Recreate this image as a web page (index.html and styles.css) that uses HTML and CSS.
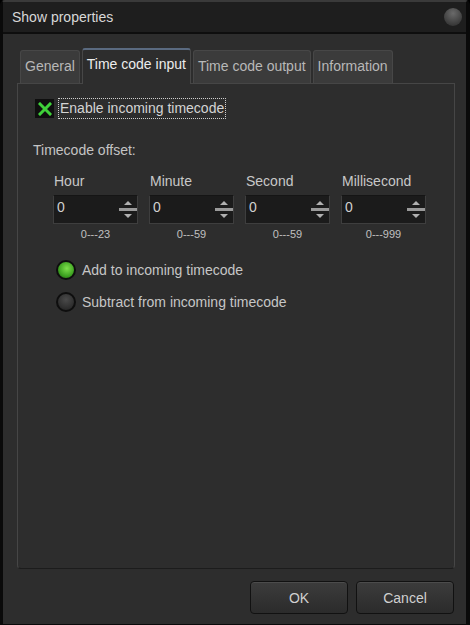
FILE: index.html
```html
<!DOCTYPE html>
<html lang="en">
<head>
<meta charset="UTF-8" />
<meta name="viewport" content="width=device-width, initial-scale=1" />
<title>Show properties</title>
<link rel="stylesheet" href="styles.css">
</head>
<body>

<div class="window">
  <div class="titlebar">
    <span class="title">Show properties</span>
    <span class="close-btn"></span>
  </div>

  <div class="tabs">
    <div class="tab">General</div>
    <div class="tab active">Time code input</div>
    <div class="tab">Time code output</div>
    <div class="tab">Information</div>
  </div>

  <div class="panel">
    <div class="check-row">
      <span class="checkbox">
        <svg width="14" height="14" viewBox="0 0 14 14">
          <path d="M2 2 L12 12 M12 2 L2 12" stroke="#3fd03a" stroke-width="3" stroke-linecap="square"/>
        </svg>
      </span>
      <span class="check-label">Enable incoming timecode</span>
    </div>

    <div class="section-label">Timecode offset:</div>

    <div class="spin-grid">
      <div class="spin">
        <div class="spin-label">Hour</div>
        <div class="spin-box"><span>0</span><span class="arrows"><i class="up"></i><b></b><i class="down"></i></span></div>
        <div class="spin-range">0---23</div>
      </div>
      <div class="spin">
        <div class="spin-label">Minute</div>
        <div class="spin-box"><span>0</span><span class="arrows"><i class="up"></i><b></b><i class="down"></i></span></div>
        <div class="spin-range">0---59</div>
      </div>
      <div class="spin">
        <div class="spin-label">Second</div>
        <div class="spin-box"><span>0</span><span class="arrows"><i class="up"></i><b></b><i class="down"></i></span></div>
        <div class="spin-range">0---59</div>
      </div>
      <div class="spin">
        <div class="spin-label">Millisecond</div>
        <div class="spin-box"><span>0</span><span class="arrows"><i class="up"></i><b></b><i class="down"></i></span></div>
        <div class="spin-range">0---999</div>
      </div>
    </div>

    <div class="radios">
      <div class="radio-row"><span class="radio on"></span>Add to incoming timecode</div>
      <div class="radio-row"><span class="radio"></span>Subtract from incoming timecode</div>
    </div>
  </div>

  <div class="buttons">
    <button class="btn">OK</button>
    <button class="btn">Cancel</button>
  </div>
</div>

</body>
</html>
```

FILE: styles.css
```css
body {
  margin: 0;
  background: #000;
  font-family: "Liberation Sans", Arial, sans-serif;
  color: #c9c9c9;
}
.window {
  width: 470px;
  height: 625px;
  box-sizing: border-box;
  background: #2d2d2d;
  border: 1px solid #0a0a0a;
  border-left-width: 3px;
  border-right-width: 4px;
  border-top: 2px solid #3a3a3a;
  border-radius: 5px 5px 0 0;
  display: flex;
  flex-direction: column;
}
.titlebar {
  height: 30px;
  background: #1e1e1e;
  border-bottom: 2px solid #0e0e0e;
  display: flex;
  align-items: center;
  justify-content: space-between;
  padding: 0 4px 0 9px;
}
.title {
  font-size: 14px;
  color: #d8d8d8;
}
.close-btn {
  width: 18px;
  height: 18px;
  border-radius: 50%;
  background: radial-gradient(circle at 50% 30%, #6a6a6a, #3c3c3c 70%, #2a2a2a);
}
.tabs {
  display: flex;
  align-items: flex-end;
  gap: 2px;
  padding-left: 17px;
  margin-top: 13px;
  height: 36px;
}
.tab {
  height: 33px;
  box-sizing: border-box;
  padding: 0 4px 2px;
  background: #3b3b3b;
  border: 1px solid #474747;
  border-bottom: none;
  border-radius: 3px 3px 0 0;
  font-size: 14px;
  color: #b8b8b8;
  display: flex;
  align-items: center;
}
.tab.active {
  height: 36px;
  background: #2d2d2d;
  color: #ececec;
  border-top: 2px solid #5a6a80;
  padding-bottom: 6px;
  margin-bottom: -1px;
  position: relative;
}
.panel {
  margin: 0 11px 0 14px;
  height: 486px;
  box-sizing: border-box;
  border: 1px solid #464646;
  border-bottom-color: #1c1c1c;
  border-radius: 0 0 4px 4px;
  padding: 14px 0 0 17px;
}
.check-row {
  display: flex;
  align-items: center;
  gap: 4px;
}
.checkbox {
  width: 19px;
  height: 19px;
  background: #0f0f0f;
  display: flex;
  align-items: center;
  justify-content: center;
}
.check-label {
  font-size: 14px;
  color: #d4d4d4;
  border: 1px dotted #d0d0d0;
  padding: 1px 1px 2px 1px;
}
.section-label {
  font-size: 14px;
  margin-top: 23px;
  margin-left: -2px;
  color: #c4c4c4;
}
.spin-grid {
  display: grid;
  grid-template-columns: repeat(4, 85px);
  column-gap: 11px;
  margin: 15px 0 0 18px;
}
.spin-label {
  font-size: 14px;
  color: #c8c8c8;
  margin-left: 1px;
  height: 22px;
}
.spin-box {
  height: 29px;
  box-sizing: border-box;
  background: #1b1b1b;
  border: 1px solid #3e3e3e;
  border-top-color: #151515;
  display: flex;
  align-items: center;
  justify-content: space-between;
  padding-left: 3px;
  font-size: 14px;
  color: #d0d0d0;
}
.spin-box > span:first-child {
  align-self: flex-start;
  margin-top: 3px;
}
.arrows {
  width: 18px;
  display: flex;
  flex-direction: column;
  align-items: center;
  gap: 3px;
}
.arrows b {
  width: 18px;
  height: 3px;
  background: #9a9a9a;
}
.arrows i {
  width: 0;
  height: 0;
  border-left: 4px solid transparent;
  border-right: 4px solid transparent;
}
.arrows .up {
  border-bottom: 4px solid #b0b0b0;
}
.arrows .down {
  border-top: 4px solid #b0b0b0;
}
.spin-range {
  font-size: 11px;
  text-align: center;
  color: #c0c0c0;
  margin-top: 4px;
}
.radios {
  margin: 20px 0 0 21px;
  display: flex;
  flex-direction: column;
  gap: 12px;
}
.radio-row {
  display: flex;
  align-items: center;
  gap: 6px;
  font-size: 14px;
  color: #c6c6c6;
}
.radio {
  width: 20px;
  height: 20px;
  box-sizing: border-box;
  border-radius: 50%;
  border: 2px solid #0e0e0e;
  background: radial-gradient(circle at 50% 35%, #4a4a4a, #2a2a2a 75%);
}
.radio.on {
  background: radial-gradient(circle at 55% 40%, #7ee04c, #3ca020 60%, #1e5e10);
}
.buttons {
  display: flex;
  justify-content: flex-end;
  gap: 8px;
  padding: 12px 12px 0 0;
}
.btn {
  width: 98px;
  height: 33px;
  font-family: inherit;
  font-size: 14px;
  color: #d0d0d0;
  background: linear-gradient(#3c3c3c, #2b2b2b);
  border: 1px solid #111;
  border-radius: 4px;
  box-shadow: inset 0 1px 0 #4c4c4c;
}
```
